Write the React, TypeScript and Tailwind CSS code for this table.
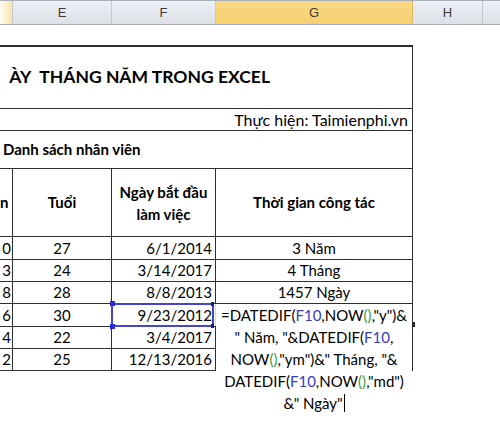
const rows = [
  { d: '0', age: '27', start: '6/1/2014', time: '3 Năm', h: 'h-[23px]' },
  { d: '3', age: '24', start: '3/14/2017', time: '4 Tháng', h: 'h-[22px]' },
  { d: '8', age: '28', start: '8/8/2013', time: '1457 Ngày', h: 'h-[22px]' },
  { d: '6', age: '30', start: '9/23/2012', time: '', h: 'h-[23px]' },
  { d: '4', age: '22', start: '3/4/2017', time: '', h: 'h-[22px]' },
  { d: '2', age: '25', start: '12/13/2016', time: '', h: 'h-[22px]' },
];

const Ref = ({ children }: { children: React.ReactNode }) => (
  <span className="text-[#3b3bbf]">{children}</span>
);
const Paren = () => <span className="text-[#3a9a3a]">()</span>;

export default function App() {
  return (
    <div className="relative w-[500px] h-[426px] overflow-hidden bg-white font-['Lato',sans-serif] text-[15px] text-black">
      {/* Column letters */}
      <div className="flex h-[25px] border-t border-b border-[#a7afb8] text-[13px] text-[#3c3c3c] font-['Liberation_Sans',sans-serif]">
        <div className="w-[13px] border-r border-[#c3c8ce] bg-gradient-to-r from-[#fffaf0] to-[#fbe3a6]" />
        <div className="w-[99px] flex items-center justify-center border-r border-[#c3c8ce] bg-gradient-to-b from-[#eceff3] to-[#dde1e7]">E</div>
        <div className="w-[104px] flex items-center justify-center border-r border-[#c3c8ce] bg-gradient-to-b from-[#eceff3] to-[#dde1e7]">F</div>
        <div className="w-[197px] flex items-center justify-center border-r border-[#e0b860] bg-gradient-to-b from-[#f9d884] to-[#f7cf6e]">G</div>
        <div className="w-[70px] flex items-center justify-center border-r border-[#c3c8ce] bg-gradient-to-b from-[#eceff3] to-[#dde1e7]">H</div>
        <div className="flex-1 bg-gradient-to-b from-[#eceff3] to-[#dde1e7]" />
      </div>

      <div className="h-[20px]" />

      {/* Title */}
      <div className="w-[413px] h-[64px] border-t-2 border-b border-r border-[#2e2e2e] flex items-center justify-end pr-[142px] whitespace-nowrap">
        <span className="text-[17.5px] font-bold">
          ÀY<span className="ml-[8px]">THÁNG NĂM TRONG EXCEL</span>
        </span>
      </div>
      <div className="w-[413px] h-[22px] border-b border-r border-[#2e2e2e] flex items-center justify-end pr-[4px] text-[16px]">
        Thực hiện: Taimienphi.vn
      </div>
      <div className="w-[413px] h-[38px] border-b border-r border-[#2e2e2e] flex items-center pl-[3px] font-bold">
        Danh sách nhân viên
      </div>

      {/* Table header */}
      <div className="flex h-[68px] font-bold">
        <div className="w-[13px] border-r border-b border-[#2e2e2e] flex items-center">
          <span>n</span>
        </div>
        <div className="w-[99px] border-r border-b border-[#2e2e2e] flex items-center justify-center">Tuổi</div>
        <div className="w-[104px] border-r border-b border-[#2e2e2e] flex flex-col items-center justify-center leading-[22px]">
          <span>Ngày bắt đầu</span>
          <span>làm việc</span>
        </div>
        <div className="w-[197px] border-r border-b border-[#2e2e2e] flex items-center justify-center">Thời gian công tác</div>
      </div>

      {/* Data rows */}
      {rows.map((r, i) => (
        <div key={i} className={`flex ${r.h}`}>
          <div className="w-[13px] border-r border-b border-[#2e2e2e] flex items-center justify-end pr-[1px]">
            <span>{r.d}</span>
          </div>
          <div className="w-[99px] border-r border-b border-[#2e2e2e] flex items-center justify-center">{r.age}</div>
          <div className="w-[104px] border-r border-b border-[#2e2e2e] flex items-center justify-end pr-[3px]">{r.start}</div>
          <div className="w-[197px] border-r border-b border-[#2e2e2e] flex items-center justify-center">{r.time}</div>
        </div>
      ))}

      {/* Selected reference F10 */}
      <div className="absolute left-[111px] top-[303px] w-[103px] h-[24px] border-2 border-[#4343d6]" />
      <div className="absolute left-[110px] top-[301px] w-[5px] h-[5px] bg-[#2a2ad8]" />
      <div className="absolute left-[110px] top-[324px] w-[5px] h-[5px] bg-[#2a2ad8]" />
      <div className="absolute left-[211px] top-[302px] w-[3px] h-[4px] bg-[#1b1b7a]" />
      <div className="absolute left-[211px] top-[324px] w-[3px] h-[4px] bg-[#1b1b7a]" />

      {/* In-cell formula editor */}
      <div className="absolute left-[215px] top-[304px] w-[1px] h-[22px] bg-[#f1e07a]" />
      <div className="absolute left-[216px] top-[304px] w-[196px] h-[112px] bg-white flex flex-col items-center leading-[22px] whitespace-nowrap">
        <span>=DATEDIF(<Ref>F10</Ref>,NOW<Paren />,"y")&amp;</span>
        <span>" Năm, "&amp;DATEDIF(<Ref>F10</Ref>,</span>
        <span>NOW<Paren />,"ym")&amp;" Tháng, "&amp;</span>
        <span>DATEDIF(<Ref>F10</Ref>,NOW<Paren />,"md")</span>
        <span className="flex items-center">
          &amp;" Ngày"<span className="inline-block w-[1px] h-[18px] bg-black ml-[1px]" />
        </span>
      </div>
      <div className="absolute left-[413px] top-[322px] w-[2px] h-[5px] bg-[#222]" />
    </div>
  );
}
